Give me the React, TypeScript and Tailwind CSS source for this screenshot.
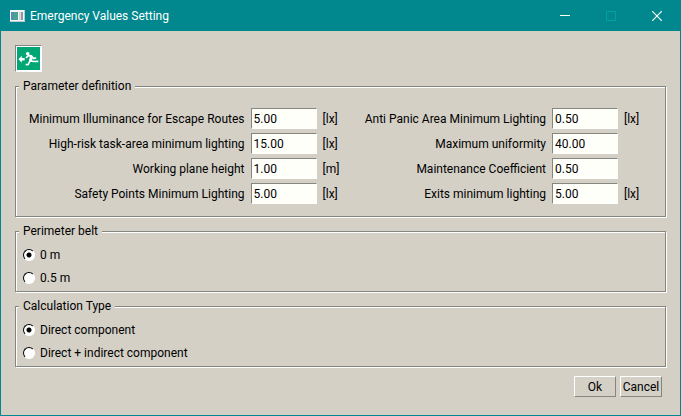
import { useState } from 'react';
import type { ReactNode } from 'react';

type Parameter = {
  id: string;
  label: string;
  value: string;
  unit?: string;
};

// Listed row by row, two parameters per row
const parameters: Parameter[] = [
  { id: 'escape-routes', label: 'Minimum Illuminance for Escape Routes', value: '5.00', unit: '[lx]' },
  { id: 'anti-panic', label: 'Anti Panic Area Minimum Lighting', value: '0.50', unit: '[lx]' },
  { id: 'high-risk', label: 'High-risk task-area minimum lighting', value: '15.00', unit: '[lx]' },
  { id: 'uniformity', label: 'Maximum uniformity', value: '40.00' },
  { id: 'plane-height', label: 'Working plane height', value: '1.00', unit: '[m]' },
  { id: 'maintenance', label: 'Maintenance Coefficient', value: '0.50' },
  { id: 'safety-points', label: 'Safety Points Minimum Lighting', value: '5.00', unit: '[lx]' },
  { id: 'exits', label: 'Exits minimum lighting', value: '5.00', unit: '[lx]' },
];

function AppIcon() {
  return (
    <svg className="w-4 h-4" viewBox="0 0 16 16" shapeRendering="crispEdges" aria-hidden="true">
      <rect x="1" y="2" width="15" height="12" fill="#c3c9cc" />
      <rect x="1" y="2" width="14" height="11" fill="#f4f6f7" />
      <rect x="2" y="4" width="7" height="8" fill="#4aa38c" />
      <rect x="2" y="4" width="3" height="8" fill="#5590b0" />
      <rect x="10" y="4" width="2" height="8" fill="#d5dadd" />
      <rect x="12" y="4" width="2" height="8" fill="#8f9aa3" />
    </svg>
  );
}

function ExitIcon() {
  return (
    <svg className="w-full h-full" viewBox="0 0 24 24" aria-hidden="true">
      <rect width="24" height="24" fill="#00a673" />
      <path d="M1.5 12.8 5 9.2V11.6H8V14H5V16.4Z" fill="#fff" />
      <circle cx="11.2" cy="7" r="1.9" fill="#fff" />
      <path
        d="M9.4 11.4 12 9 15 9.2 17.3 12 20 11.2M15 11 13.5 14.2 17.5 15.2 22.3 15M13.6 14 11.8 18.2 9 18.4"
        fill="none"
        stroke="#fff"
        strokeWidth="1.6"
      />
      <path d="M12.5 8.5 15.8 8.9 16.3 12 15 15 12.4 14.3 13.4 11Z" fill="#fff" />
    </svg>
  );
}

function GroupBox({ title, children }: { title: string; children: ReactNode }) {
  return (
    <fieldset className="min-w-0 border border-[#868681] shadow-[1px_1px_0_#fff,inset_1px_1px_0_#fff]">
      <legend className="ml-[3px] px-1 h-4 leading-4 bg-[#d4d0c6]">{title}</legend>
      {children}
    </fieldset>
  );
}

type RadioListProps = {
  name: string;
  options: string[];
  selected: string;
  onSelect: (option: string) => void;
};

function RadioList({ name, options, selected, onSelect }: RadioListProps) {
  return (
    <div className="flex flex-col items-start gap-[7px] pl-[7px] pt-2 pb-[5px]">
      {options.map((option) => (
        <label key={option} className="flex items-center gap-[5px] h-4 leading-4">
          <input
            type="radio"
            name={name}
            checked={selected === option}
            onChange={() => onSelect(option)}
            className="appearance-none w-3 h-3 rounded-full bg-white border border-t-black border-l-black border-r-white border-b-white checked:bg-[radial-gradient(circle,#000_2px,#fff_3px)]"
          />
          {option}
        </label>
      ))}
    </div>
  );
}

export default function App() {
  const [values, setValues] = useState<Record<string, string>>(
    Object.fromEntries(parameters.map((p) => [p.id, p.value]))
  );
  const [belt, setBelt] = useState('0 m');
  const [calculation, setCalculation] = useState('Direct component');

  const buttonClass =
    'w-[42px] h-[21px] text-center border border-t-white border-l-white border-r-[#868681] border-b-[#868681]';

  return (
    <div className="min-h-screen flex flex-col bg-[#d4d0c6] border border-[#00888e] text-black text-[12px] font-['Roboto',sans-serif]">
      {/* Title bar */}
      <header className="h-[30px] flex items-center pl-2 bg-[#00888e] text-white">
        <AppIcon />
        <h1 className="ml-[5px] flex-1">Emergency Values Setting</h1>
        <button aria-label="Minimize" className="w-[46px] h-full flex justify-center items-center">
          <svg className="w-[10px] h-[10px]" viewBox="0 0 10 10" aria-hidden="true">
            <path d="M0 4.5H10" stroke="#fff" />
          </svg>
        </button>
        <button aria-label="Maximize" disabled className="w-[46px] h-full flex justify-center items-center">
          <svg className="w-[10px] h-[10px]" viewBox="0 0 10 10" fill="none" aria-hidden="true">
            <path d="M.5 .5H9.5V9.5H.5Z" stroke="#00a0a5" />
          </svg>
        </button>
        <button aria-label="Close" className="w-[46px] h-full flex justify-center items-center">
          <svg className="w-[10px] h-[10px]" viewBox="0 0 10 10" aria-hidden="true">
            <path d="M0 0 10 10M10 0 0 10" stroke="#fff" strokeWidth="1.2" />
          </svg>
        </button>
      </header>

      <main className="flex flex-col gap-1.5 px-3.5 pt-3.5">
        <div className="w-[27px] h-[27px] p-px bg-white border border-t-[#868681] border-l-[#868681] border-r-white border-b-white">
          <ExitIcon />
        </div>

        <GroupBox title="Parameter definition">
          <div className="grid grid-cols-[228fr_66px_20px_197fr_66px_41px] gap-x-1.5 gap-y-1 items-center pt-3.5 pb-3">
            {parameters.map((p) => (
              <div key={p.id} className="contents">
                <label htmlFor={p.id} className="text-right whitespace-nowrap">
                  {p.label}
                </label>
                <input
                  id={p.id}
                  type="text"
                  value={values[p.id]}
                  onChange={(e) => setValues({ ...values, [p.id]: e.target.value })}
                  className="w-full h-[21px] px-0.5 bg-[#fffffa] border border-t-[#868681] border-l-[#868681] border-r-white border-b-white"
                />
                <span>{p.unit}</span>
              </div>
            ))}
          </div>
        </GroupBox>

        <GroupBox title="Perimeter belt">
          <RadioList name="belt" options={['0 m', '0.5 m']} selected={belt} onSelect={setBelt} />
        </GroupBox>

        <GroupBox title="Calculation Type">
          <RadioList
            name="calculation"
            options={['Direct component', 'Direct + indirect component']}
            selected={calculation}
            onSelect={setCalculation}
          />
        </GroupBox>

        <div className="flex justify-end gap-1 pt-[3px] pr-1">
          <button className={buttonClass}>Ok</button>
          <button className={buttonClass}>Cancel</button>
        </div>
      </main>
    </div>
  );
}
